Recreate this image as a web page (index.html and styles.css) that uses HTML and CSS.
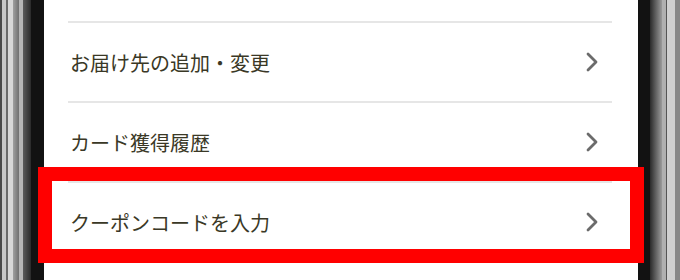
FILE: index.html
```html
<!DOCTYPE html>
<html lang="ja">
<head>
<meta charset="utf-8">
<link rel="stylesheet" href="styles.css">
</head>
<body>
<div class="phone">
  <div class="bezel bezel-left"></div>
  <div class="screen">
    <div class="top-gap"></div>
    <ul class="menu">
      <li class="item"><span class="label">お届け先の追加・変更</span><svg class="chev" viewBox="0 0 12 20" width="12" height="20"><path d="M2 2 L10 10 L2 18" /></svg></li>
      <li class="item"><span class="label">カード獲得履歴</span><svg class="chev" viewBox="0 0 12 20" width="12" height="20"><path d="M2 2 L10 10 L2 18" /></svg></li>
      <li class="item"><span class="label">クーポンコードを入力</span><svg class="chev" viewBox="0 0 12 20" width="12" height="20"><path d="M2 2 L10 10 L2 18" /></svg></li>
    </ul>
  </div>
  <div class="bezel bezel-right"></div>
  <div class="highlight"></div>
</div>
</body>
</html>
```
FILE: styles.css
```css
html, body {
  margin: 0;
  padding: 0;
  background: #ffffff;
}
body {
  width: 680px;
  height: 280px;
  overflow: hidden;
  font-family: "Noto Sans CJK JP", "Noto Sans", sans-serif;
}
.phone {
  position: relative;
  display: flex;
  width: 680px;
  height: 280px;
}
.bezel {
  flex: none;
  height: 100%;
}
.bezel-left {
  width: 44px;
  background: linear-gradient(to right,
    #4a4a4a 0px, #4a4a4a 2px,
    #c8c8c8 2px, #c8c8c8 6px,
    #6a6a6a 6px, #6a6a6a 8px,
    #d8d8d8 8px, #d8d8d8 13px,
    #a0a0a0 13px, #707070 19px,
    #b5b5b5 19px, #b5b5b5 23px,
    #5a5a5a 23px, #2a2a2a 31px,
    #121212 31px, #121212 44px);
}
.bezel-right {
  width: 42px;
  background: linear-gradient(to right,
    #121212 0px, #121212 12px,
    #2a2a2a 12px, #9a9a9a 24px,
    #b0b0b0 24px, #b0b0b0 28px,
    #555555 28px, #555555 29px,
    #d0d0d0 29px, #d0d0d0 37px,
    #888888 37px, #888888 42px);
}
.screen {
  flex: 1;
  background: #ffffff;
  padding: 0 26px 0 24px;
}
.top-gap {
  height: 21px;
}
.menu {
  list-style: none;
  margin: 0;
  padding: 0;
}
.item {
  display: flex;
  align-items: center;
  justify-content: space-between;
  height: 78px;
  border-top: 2px solid #e6e6e6;
  padding: 0 14px 0 2px;
}
.label {
  font-size: 20px;
  color: #3a3826;
  letter-spacing: 0;
}
.chev {
  display: block;
}
.chev path {
  fill: none;
  stroke: #6b6b6b;
  stroke-width: 2.8;
  stroke-linecap: round;
  stroke-linejoin: round;
}
.highlight {
  position: absolute;
  left: 38px;
  top: 167px;
  width: 606px;
  height: 96px;
  box-sizing: border-box;
  border: 14px solid #ff0000;
}
```
